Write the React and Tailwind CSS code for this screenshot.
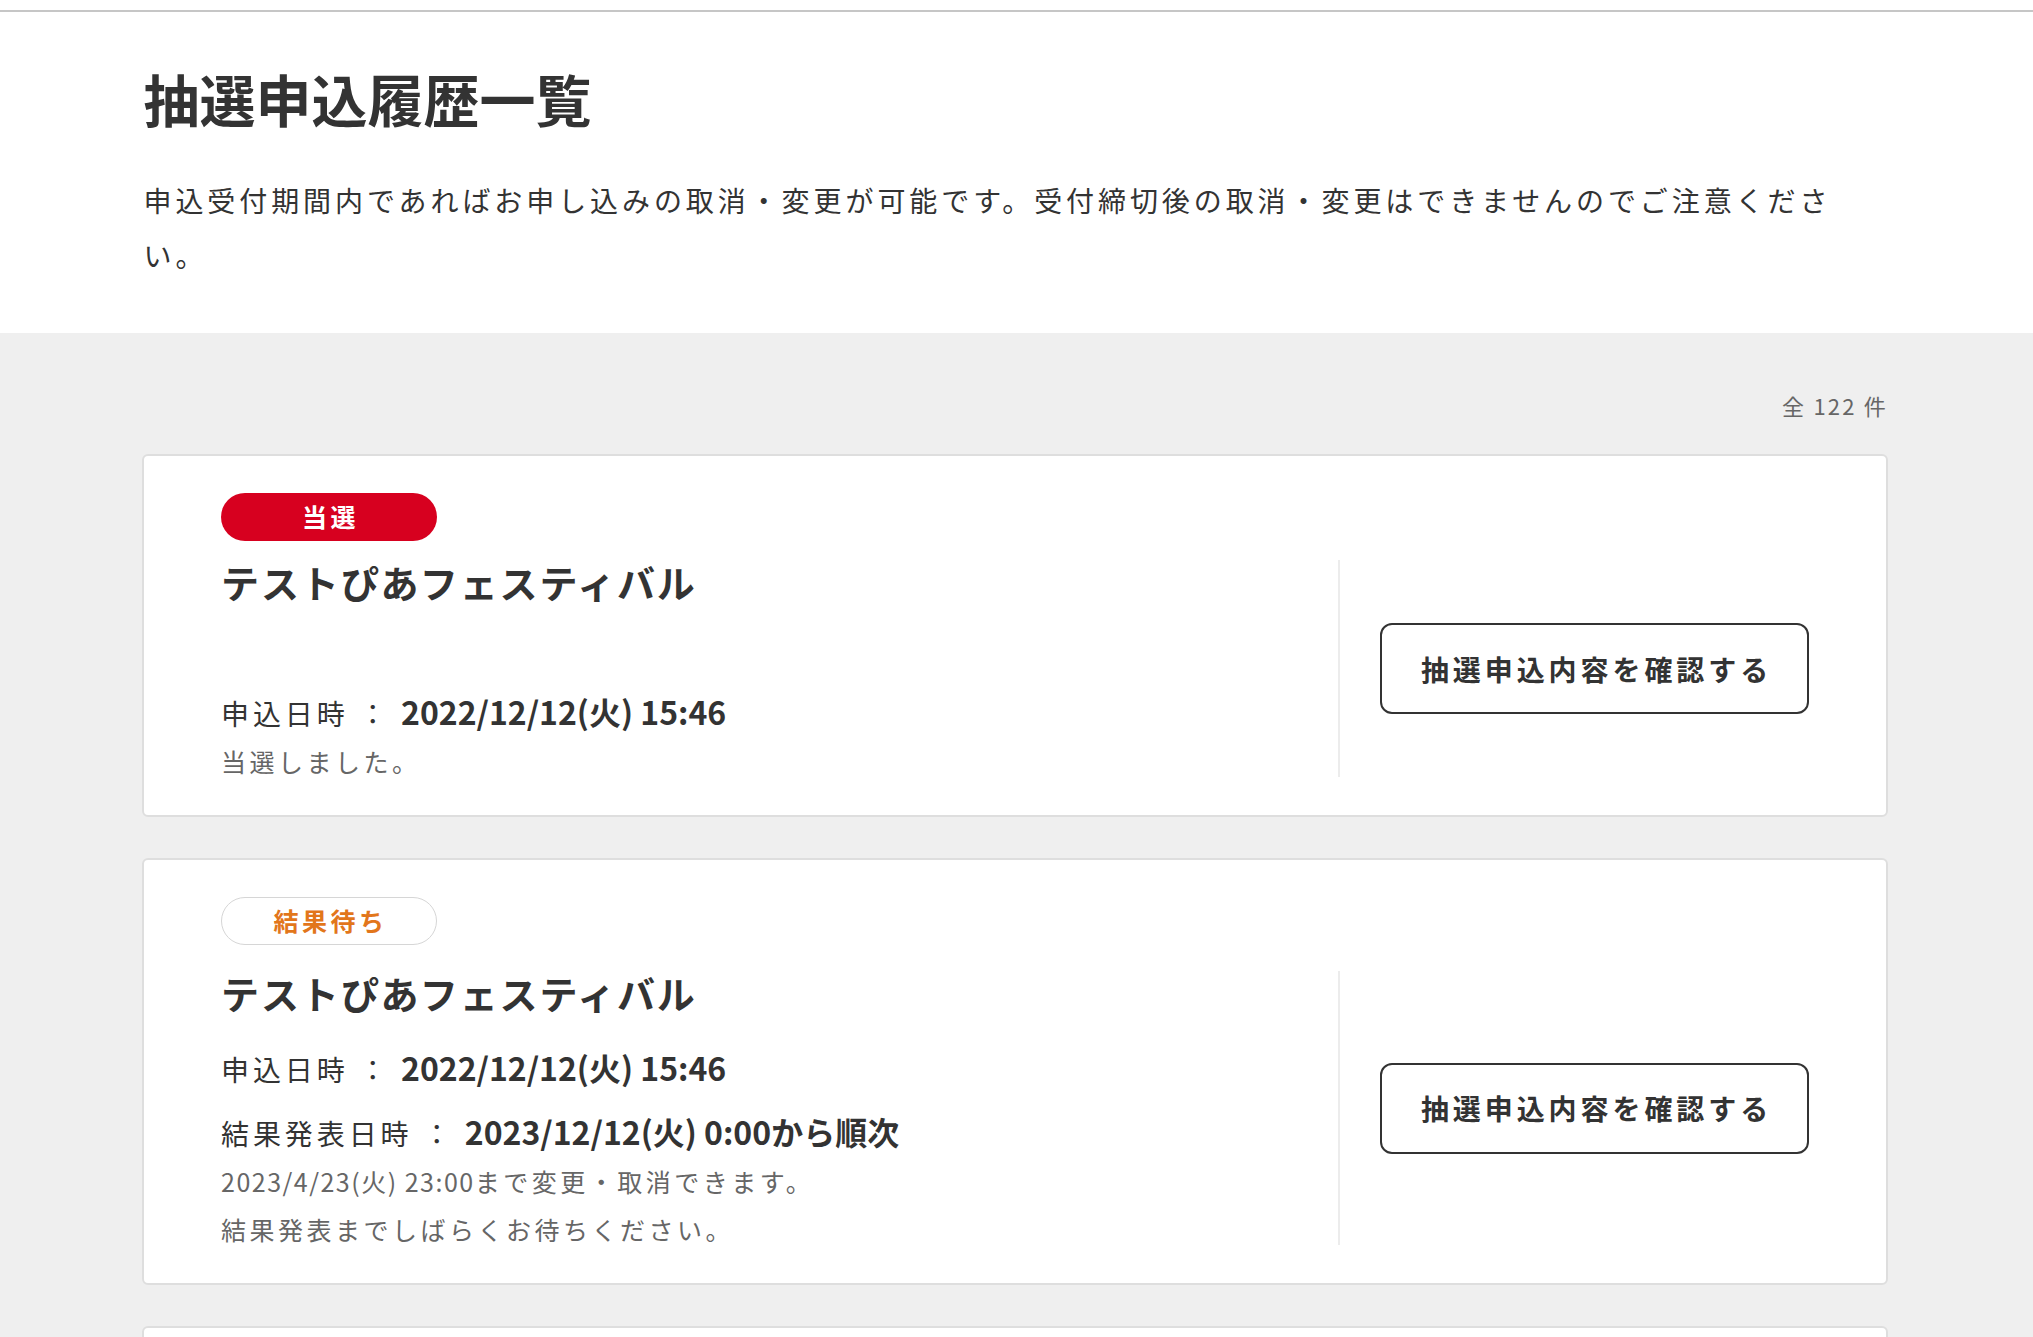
const entries = [
  {
    id: "1",
    status: "won",
    title: "テストぴあフェスティバル",
    applied: "2022/12/12(火) 15:46",
    result: null,
    notes: [{ date: "", text: "当選しました。" }],
    rowGap: "mt-[19px]",
  },
  {
    id: "2",
    status: "pending",
    title: "テストぴあフェスティバル",
    applied: "2022/12/12(火) 15:46",
    result: "2023/12/12(火) 0:00から順次",
    notes: [
      { date: "2023/4/23(火) 23:00", text: "まで変更・取消できます。" },
      { date: "", text: "結果発表までしばらくお待ちください。" },
    ],
    rowGap: "mt-[26px]",
  },
  {
    id: "3",
    status: "pending",
    title: "テストぴあフェスティバル",
    applied: "2022/12/12(火) 15:46",
    result: "2023/12/12(火) 0:00から順次",
    notes: [
      { date: "2023/4/23(火) 23:00", text: "まで変更・取消できます。" },
      { date: "", text: "結果発表までしばらくお待ちください。" },
    ],
    rowGap: "mt-[26px]",
  },
];

const Badge = ({ status }) => {
  if (status === "won") {
    return (
      <span className="inline-flex h-[48px] w-[216px] items-center justify-center rounded-full bg-[#d7001f] pl-[3px] text-[25px] font-bold tracking-[0.14em] text-white">
        当選
      </span>
    );
  }
  return (
    <span className="inline-flex h-[48px] w-[216px] items-center justify-center rounded-full border-[1.5px] border-[#d6d6d6] bg-white pl-[3px] text-[25px] font-bold tracking-[0.14em] text-[#e2761b]">
      結果待ち
    </span>
  );
};

const EntryCard = ({ item }) => (
  <li className="rounded-[6px] border-2 border-[#dedede] bg-white px-[77px] pt-[37px] pb-[38px]">
    <Badge status={item.status} />
    <div className={"flex " + item.rowGap}>
      <div className="flex-1">
        <h2 className="text-[38px] font-bold leading-[44px] tracking-[0.05em]">{item.title}</h2>
        {!item.result && <div className="h-[55px]" />}
        <p className="mt-[28px] text-[28px] leading-[48px] tracking-[0.14em]">
          申込日時 ： <span className="text-[32px] font-bold tracking-normal">{item.applied}</span>
        </p>
        {item.result && (
          <p className="mt-[14px] text-[28px] leading-[48px] tracking-[0.14em]">
            結果発表日時 ： <span className="text-[32px] font-bold tracking-normal">{item.result}</span>
          </p>
        )}
        {item.notes.map((note, i) => (
          <p
            key={i}
            className={
              i === 0
                ? "mt-[9px] text-[25px] leading-[31px] tracking-[0.14em] text-[#666]"
                : "mt-[17px] text-[25px] leading-[31px] tracking-[0.14em] text-[#666]"
            }
          >
            {note.date && <span className="tracking-[0.06em]">{note.date}</span>}
            {note.text}
          </p>
        ))}
      </div>
      <div className="flex items-center border-l-2 border-[#ececec] pl-[40px]">
        <button className="h-[91px] w-[429px] rounded-[12px] border-2 border-[#333] bg-white pl-[4px] text-[28px] font-bold tracking-[0.14em] text-[#333]">
          抽選申込内容を確認する
        </button>
      </div>
    </div>
  </li>
);

export default function App() {
  return (
    <div className="min-h-screen bg-[#efefef] font-['Noto_Sans_CJK_JP','Noto_Sans_CJK_SC',sans-serif] text-[#333]">
      <div className="h-[10px] bg-white" />
      <header className="border-t-2 border-[#c6c6c6] bg-white">
        <div className="mx-auto w-[1746px] pt-[46px] pb-[50px]">
          <h1 className="text-[56px] font-bold leading-[80px]">抽選申込履歴一覧</h1>
          <p className="mt-[35px] pr-[40px] text-[28px] leading-[55px] tracking-[0.14em]">
            申込受付期間内であればお申し込みの取消・変更が可能です。受付締切後の取消・変更はできませんのでご注意ください。
          </p>
        </div>
      </header>

      <main className="ml-[142px] w-[1746px] pt-[56px] pb-16">
        <p className="text-right text-[22px] leading-[33px] tracking-[0.1em] text-[#666]">全 122 件</p>
        <ul className="mt-[32px] flex flex-col gap-[41px]">
          {entries.map((item) => (
            <EntryCard key={item.id} item={item} />
          ))}
        </ul>
      </main>
    </div>
  );
}
